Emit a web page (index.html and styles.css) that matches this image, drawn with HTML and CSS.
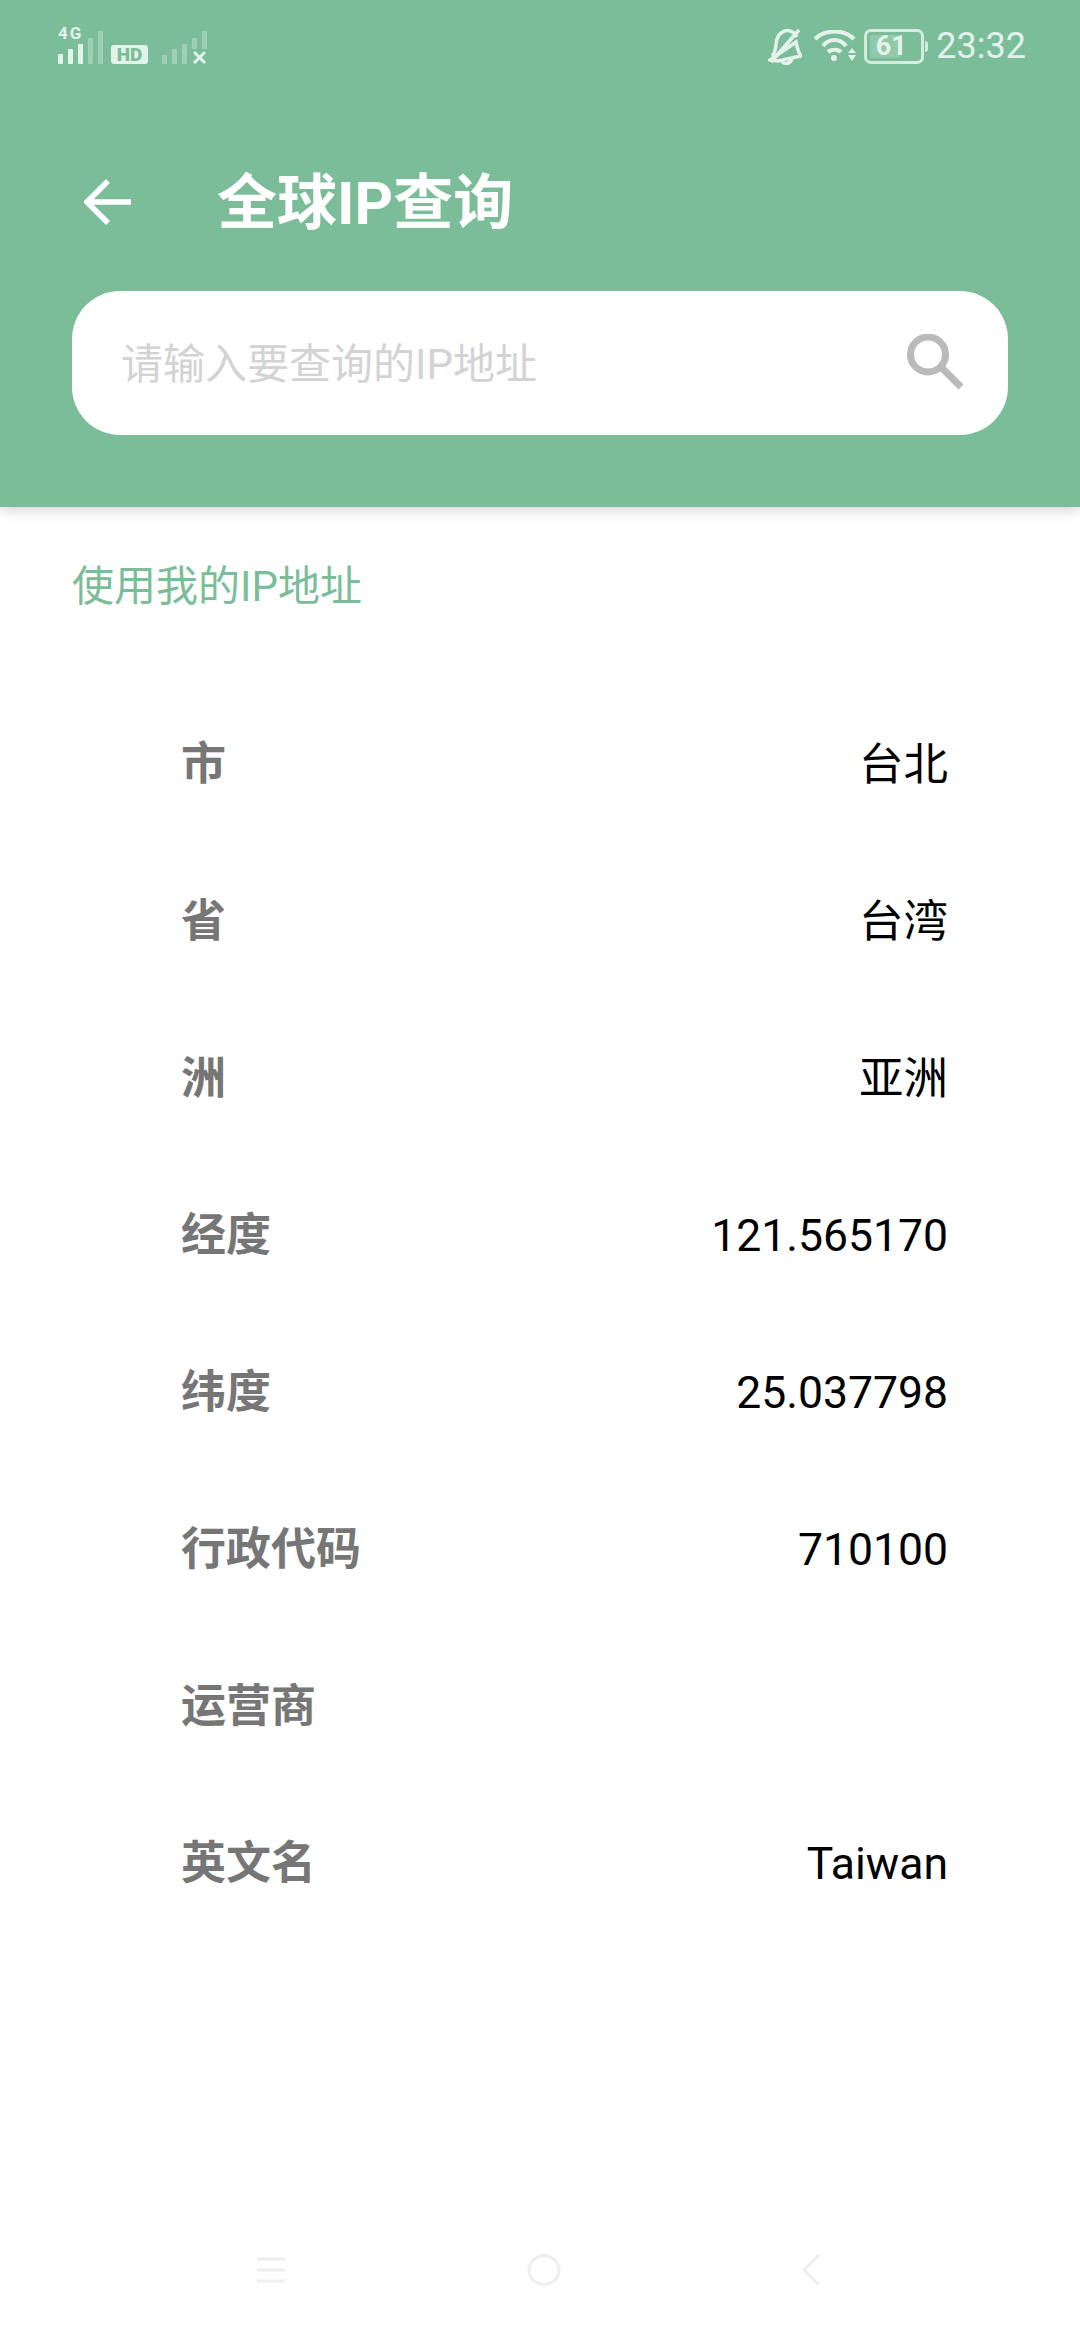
FILE: index.html
```html
<!DOCTYPE html>
<html lang="zh-CN">
<head>
    <meta charset="UTF-8">
    <meta name="viewport" content="width=device-width, initial-scale=1.0">
    <title>全球IP查询</title>
    <link rel="stylesheet" href="styles.css">
</head>
<body>
    <div class="screen">
        <header class="header">
            <div class="status-bar">
                <div class="status-left">
                    <svg class="signal-main" width="50" height="44" viewBox="0 0 50 44">
                        <text class="net-label" x="0" y="19">4G</text>
                        <rect class="bar-on" x="0" y="34" width="5" height="10" rx="1"/>
                        <rect class="bar-on" x="10" y="29" width="5" height="15" rx="1"/>
                        <rect class="bar-on" x="20" y="24" width="5" height="20" rx="1"/>
                        <rect class="bar-off" x="30" y="18" width="5" height="26" rx="1"/>
                        <rect class="bar-off" x="40" y="11" width="5" height="33" rx="1"/>
                    </svg>
                    <span class="hd-badge">HD</span>
                    <svg class="signal-second" width="46" height="34" viewBox="0 0 46 34">
                        <rect class="bar-off" x="0" y="25" width="5" height="9" rx="1"/>
                        <rect class="bar-off" x="10" y="19" width="5" height="15" rx="1"/>
                        <rect class="bar-off" x="20" y="14" width="5" height="20" rx="1"/>
                        <rect class="bar-off" x="30" y="8" width="5" height="11" rx="1"/>
                        <rect class="bar-off" x="40" y="1" width="5" height="18" rx="1"/>
                        <path class="x-mark" d="M32 22 L43 33 M43 22 L32 33"/>
                    </svg>
                </div>
                <div class="status-right">
                    <svg class="bell" width="34" height="38" viewBox="0 0 34 38">
                        <path d="M4 29 C9 24 7 18 9 12 C11 6 17 2 22 4 C26 5 28 8 29 10 M28 15 C29 20 30 25 33 29 L10 34 L2 33 Z" />
                        <path d="M3 35 L31 3" />
                        <path d="M14 34 C16 38 22 37 24 32" />
                    </svg>
                    <svg class="wifi" width="42" height="32" viewBox="0 0 42 32">
                        <path class="wifi-arc" d="M1 9 C11 -1 30 -1 40 9"/>
                        <path class="wifi-arc" d="M9 16 C15 8 26 8 32 16"/>
                        <path class="wifi-arc" d="M14 22 C17 19 24 19 27 22"/>
                        <circle class="wifi-fill" cx="20" cy="28" r="3"/>
                        <path class="wifi-fill" d="M38 18 L42 23 L34 23 Z M34 25 L42 25 L38 31 Z"/>
                    </svg>
                    <div class="battery">
                        <span class="battery-level"></span>
                        <span class="battery-text">61</span>
                    </div>
                    <span class="clock">23:32</span>
                </div>
            </div>
            <div class="toolbar">
                <svg class="back-icon" width="48" height="48" viewBox="0 0 48 48">
                    <path d="M47 24 H4 M24 3 L3 24 L24 45"/>
                </svg>
                <h1 class="title">全球IP查询</h1>
            </div>
            <div class="search-box">
                <input class="search-input" type="text" placeholder="请输入要查询的IP地址">
                <svg class="search-icon" width="58" height="58" viewBox="0 0 58 58">
                    <circle cx="21" cy="20.500" r="17.500"/>
                    <path d="M34 33 L54 53"/>
                </svg>
            </div>
        </header>
        <main class="content">
            <a class="my-ip">使用我的IP地址</a>
            <div class="info-list">
                <div class="info-row"><span class="info-label">市</span><span class="info-value">台北</span></div>
                <div class="info-row"><span class="info-label">省</span><span class="info-value">台湾</span></div>
                <div class="info-row"><span class="info-label">洲</span><span class="info-value">亚洲</span></div>
                <div class="info-row"><span class="info-label">经度</span><span class="info-value">121.565170</span></div>
                <div class="info-row"><span class="info-label">纬度</span><span class="info-value">25.037798</span></div>
                <div class="info-row"><span class="info-label">行政代码</span><span class="info-value">710100</span></div>
                <div class="info-row"><span class="info-label">运营商</span><span class="info-value"></span></div>
                <div class="info-row"><span class="info-label">英文名</span><span class="info-value">Taiwan</span></div>
            </div>
        </main>
        <nav class="nav-bar">
            <svg width="30" height="26" viewBox="0 0 30 26">
                <path d="M1 2 H29 M1 13 H29 M1 24 H29"/>
            </svg>
            <svg width="36" height="34" viewBox="0 0 36 34">
                <ellipse cx="18" cy="17" rx="15" ry="14.500"/>
            </svg>
            <svg width="20" height="34" viewBox="0 0 20 34">
                <path d="M18 2 L3 17 L18 32"/>
            </svg>
        </nav>
    </div>
</body>
</html>
```

FILE: styles.css
```css
* {
    box-sizing: border-box;
}
body {
    margin: 0;
    background-color: #ffffff;
    font-family: Roboto, "Noto Sans CJK SC", sans-serif;
}
.screen {
    width: 1080px;
    height: 2340px;
    display: flex;
    flex-direction: column;
    overflow: hidden;
}
.header {
    height: 507px;
    padding-bottom: 72px;
    background-color: #7cbd99;
    box-shadow: 0 3px 12px rgba(0, 0, 0, 0.18);
    position: relative;
}
.status-bar {
    height: 72px;
    padding: 27px 54px 0 58px;
    display: flex;
    justify-content: space-between;
    align-items: flex-start;
}
.status-left {
    display: flex;
    align-items: flex-end;
    height: 37px;
}
.signal-main {
    flex: none;
}
.net-label {
    font-size: 17px;
    font-weight: 700;
    letter-spacing: 2px;
    fill: #e3f2ea;
}
.bar-on {
    fill: #e3f2ea;
}
.bar-off {
    fill: #e3f2ea;
    opacity: 0.35;
}
.x-mark {
    stroke: #e3f2ea;
    stroke-width: 3;
    fill: none;
}
.hd-badge {
    width: 37px;
    height: 19px;
    margin-left: 3px;
    border-radius: 3px;
    background-color: #e3f2ea;
    color: #7cbd99;
    font-size: 19px;
    line-height: 19px;
    font-weight: 900;
    text-align: center;
}
.signal-second {
    margin-left: 14px;
}
.status-right {
    display: flex;
    align-items: center;
    height: 36px;
    margin-top: 1px;
    color: #e3f2ea;
}
.bell {
    stroke: #e3f2ea;
    stroke-width: 3.500;
    fill: none;
}
.wifi {
    margin-left: 12px;
}
.wifi-arc {
    stroke: #e3f2ea;
    stroke-width: 4;
    fill: none;
}
.wifi-fill {
    fill: #e3f2ea;
}
.battery {
    width: 60px;
    height: 35px;
    margin-left: 8px;
    padding-right: 6px;
    border: 3px solid #d5ebdf;
    border-radius: 7px;
    position: relative;
    font-size: 27px;
    font-weight: 700;
    line-height: 29px;
    text-align: center;
}
.battery::after {
    content: "";
    position: absolute;
    right: -7px;
    top: 9px;
    width: 3px;
    height: 11px;
    background-color: #d5ebdf;
    border-radius: 0 3px 3px 0;
}
.battery-level {
    position: absolute;
    left: 3px;
    top: 3px;
    bottom: 3px;
    width: 30px;
    background-color: rgba(255, 255, 255, 0.18);
    border-radius: 2px;
}
.battery-text {
    position: relative;
}
.clock {
    margin-left: 12px;
    font-size: 36px;
    line-height: 36px;
}
.toolbar {
    height: 219px;
    padding: 45px 0 0 84px;
    display: flex;
    align-items: center;
}
.back-icon {
    flex: none;
    margin-top: -4px;
    stroke: #ffffff;
    stroke-width: 5.500;
    fill: none;
}
.title {
    margin: 0 0 0 85px;
    color: #ffffff;
    font-size: 60px;
    font-weight: 700;
    line-height: 80px;
}
.search-box {
    height: 144px;
    margin: 0 72px;
    padding: 0 43px 0 49px;
    display: flex;
    align-items: center;
    background-color: #ffffff;
    border-radius: 48px;
}
.search-input {
    flex: 1;
    min-width: 0;
    padding: 2px 0 0;
    border: none;
    outline: none;
    font-family: inherit;
    font-size: 42px;
}
.search-input::placeholder {
    color: #d3d3d3;
    opacity: 1;
}
.search-icon {
    flex: none;
    stroke: #bababa;
    stroke-width: 7;
    fill: none;
}
.content {
    flex: 1;
}
.my-ip {
    display: block;
    margin: 53px 0 0 72px;
    color: #7cbd99;
    font-size: 42px;
    line-height: 54px;
}
.info-list {
    margin-top: 72px;
    padding: 0 132px 0 181px;
}
.info-row {
    height: 157px;
    display: flex;
    justify-content: space-between;
    align-items: baseline;
    font-size: 45px;
    line-height: 157px;
}
.info-label {
    color: #767676;
    font-weight: 700;
}
.info-value {
    color: #000000;
    font-size: 44.500px;
}
.nav-bar {
    height: 126px;
    padding: 0 259px 14px 256px;
    display: flex;
    justify-content: space-between;
    align-items: center;
}
.nav-bar svg {
    stroke: #eeeeee;
    stroke-width: 3;
    fill: none;
}
```
